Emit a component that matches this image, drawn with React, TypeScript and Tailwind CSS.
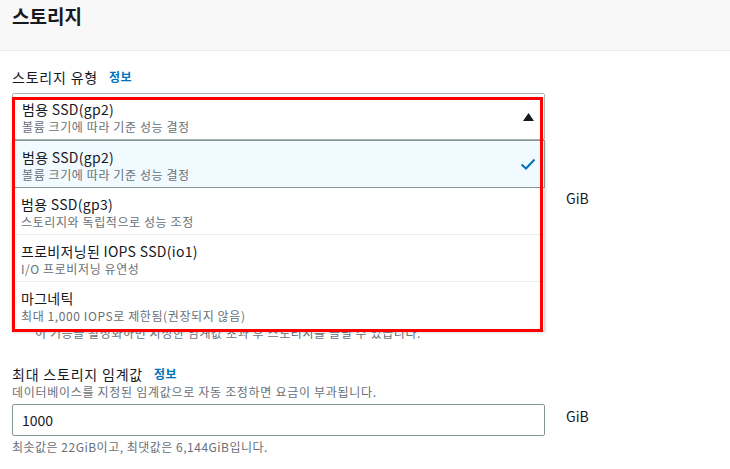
import { useState } from "react";

const options = [
  { title: "범용 SSD(gp2)", desc: "볼륨 크기에 따라 기준 성능 결정" },
  { title: "범용 SSD(gp3)", desc: "스토리지와 독립적으로 성능 조정" },
  { title: "프로비저닝된 IOPS SSD(io1)", desc: "I/O 프로비저닝 유연성" },
  { title: "마그네틱", desc: "최대 1,000 IOPS로 제한됨(권장되지 않음)" },
];

function InfoLink() {
  return <span className="ml-[11px] text-[12px] font-bold tracking-[0.5px] text-[#0073bb]">정보</span>;
}

function OptionText({ title, desc }: { title: string; desc: string }) {
  return (
    <div>
      <div className="text-[14px] leading-[20px] tracking-[0.3px]">{title}</div>
      <div className="text-[12px] leading-[16px] tracking-[0.6px] text-[#687078]">{desc}</div>
    </div>
  );
}

export default function App() {
  const [selected] = useState(0);

  return (
    <div className="w-[730px] h-[469px] overflow-hidden bg-white text-[#16191f] font-['Noto_Sans_CJK_KR','Noto_Sans',sans-serif]">
      <div className="h-[51px] bg-[#f8f8f8] border-b border-[#eaeded] px-3 pt-[1px]">
        <h2 className="text-[19px] font-bold leading-[30px]">스토리지</h2>
      </div>

      <div className="px-3 pt-[16px]">
        <div className="text-[14px] leading-[20px] tracking-[0.8px] flex items-center">
          스토리지 유형
          <InfoLink />
        </div>

        <div className="relative w-[533px] mt-[6px]">
          {/* select trigger */}
          <div className="h-[47px] border border-[#aab7b8] rounded-[2px] pl-[9px] pr-[10px] pt-[5px] flex items-start justify-between">
            <OptionText title="범용 SSD(gp2)" desc="볼륨 크기에 따라 기준 성능 결정" />
            <svg width="11" height="8" viewBox="0 0 11 8" className="mt-[14px]">
              <path d="M5.5 0 L11 8 L0 8 Z" fill="#16191f" />
            </svg>
          </div>

          {/* field under the open list */}
          <div className="mt-[42px] flex items-start gap-[21px]">
            <div className="w-[533px] h-[32px] shrink-0 border border-[#879596] rounded-[2px]" />
            <span className="mt-[6px] text-[14px] leading-[20px]">GiB</span>
          </div>
          <div className="mt-[111px] pl-[23px] text-[12px] leading-[16px] tracking-[0.6px] text-[#687078] w-[700px]">
            이 기능을 활성화하면 지정한 임계값 초과 후 스토리지를 늘릴 수 있습니다.
          </div>

          {/* open dropdown list */}
          <div className="absolute left-0 top-[47px] w-[533px] bg-white border-x border-b border-[#d5dbdb] shadow-[0_1px_3px_rgba(0,28,36,0.25)]">
            {options.map((o, i) =>
              i === selected ? (
                <div
                  key={o.title}
                  className="h-[48px] bg-[#f1faff] border border-[#879596] -mx-px pl-[9px] pr-[8px] pt-[6px] flex items-start justify-between"
                >
                  <OptionText title={o.title} desc={o.desc} />
                  <svg width="16" height="16" viewBox="0 0 16 16" className="mt-[9px]">
                    <path d="M1.5 8.5 L6 12.5 L14.5 3.5" fill="none" stroke="#0073bb" strokeWidth="2" />
                  </svg>
                </div>
              ) : (
                <div
                  key={o.title}
                  className="h-[47px] pl-[8px] pt-[6px] border-b border-[#eaeded] last:border-b-0 last:h-[48px]"
                >
                  <OptionText title={o.title} desc={o.desc} />
                </div>
              )
            )}
          </div>

          {/* highlight annotation */}
          <div className="absolute left-0 top-[4px] w-[531px] h-[235px] border-[3px] border-[#ff0000] pointer-events-none" />
        </div>

        <div className="mt-[23px] text-[14px] leading-[20px] tracking-[0.8px] flex items-center">
          최대 스토리지 임계값
          <InfoLink />
        </div>
        <div className="text-[12px] leading-[16px] tracking-[0.7px] text-[#687078]">
          데이터베이스를 지정된 임계값으로 자동 조정하면 요금이 부과됩니다.
        </div>
        <div className="mt-[4px] flex items-start gap-[21px]">
          <div className="w-[533px] h-[32px] shrink-0 border border-[#879596] rounded-[2px] pl-[9px] flex items-center text-[14px]">
            1000
          </div>
          <span className="mt-[2px] text-[14px] leading-[20px]">GiB</span>
        </div>
        <div className="mt-[3px] text-[12px] leading-[16px] tracking-[0.5px] text-[#687078]">
          최솟값은 22GiB이고, 최댓값은 6,144GiB입니다.
        </div>
      </div>
    </div>
  );
}
